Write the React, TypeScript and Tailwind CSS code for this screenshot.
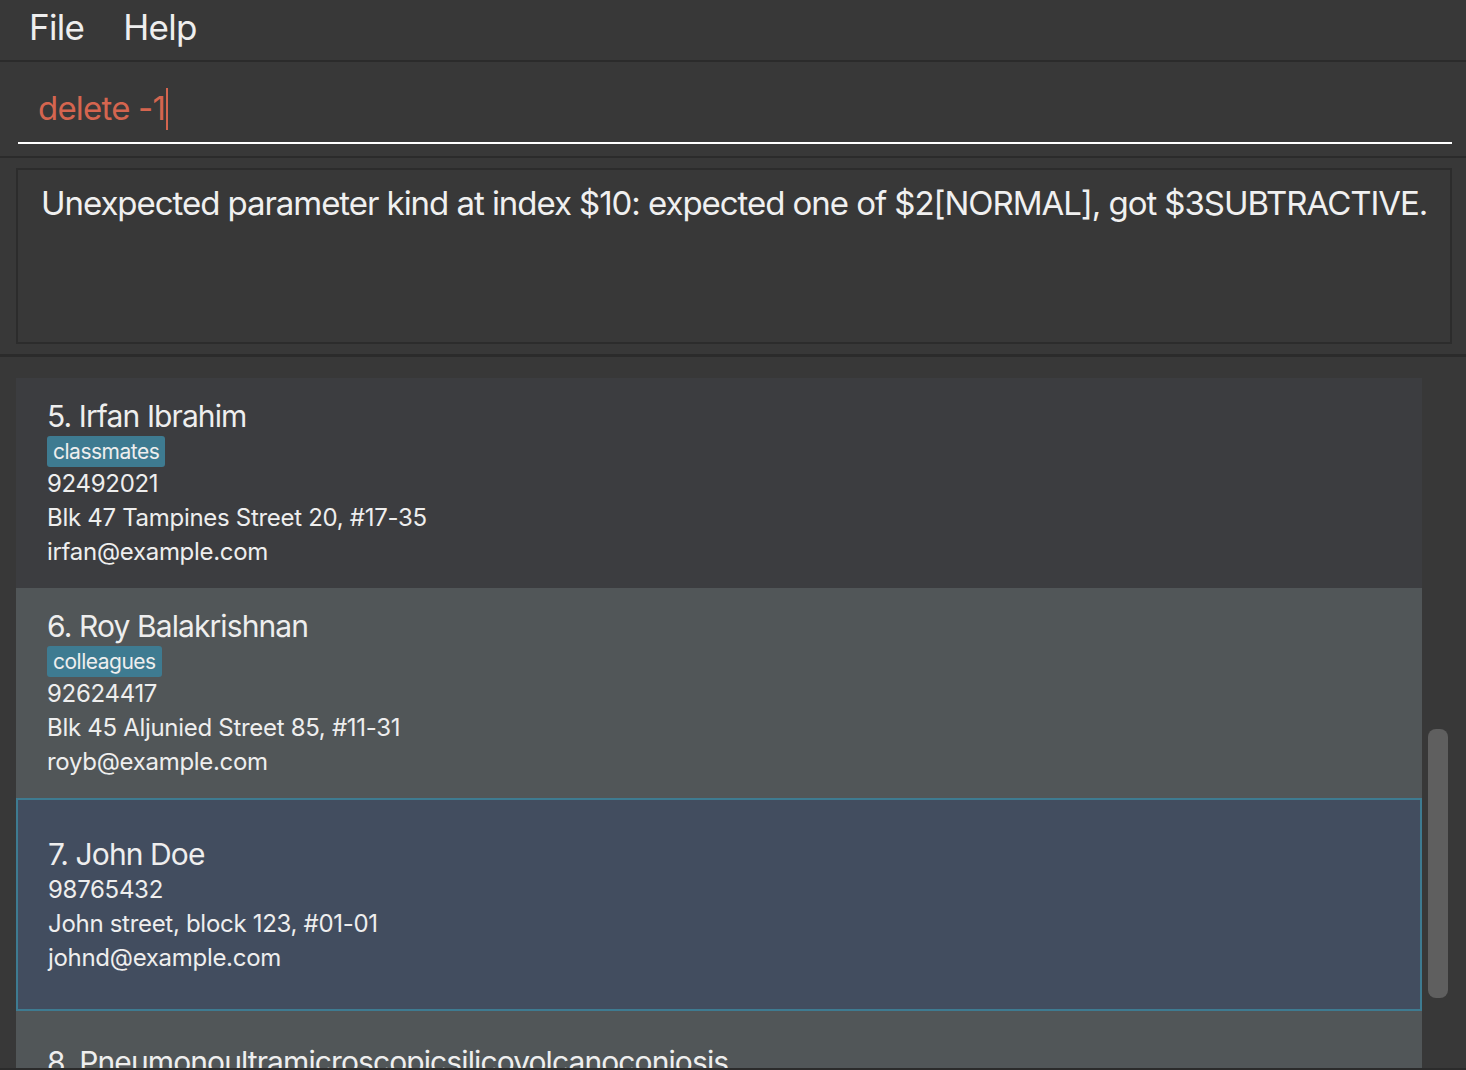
import React from "react";

const font = { fontFamily: "Inter, 'Noto Sans', sans-serif" };

type Person = {
  idx: number;
  name: string;
  tag?: string;
  phone: string;
  address: string;
  email: string;
};

const people: Person[] = [
  { idx: 5, name: "Irfan Ibrahim", tag: "classmates", phone: "92492021", address: "Blk 47 Tampines Street 20, #17-35", email: "irfan@example.com" },
  { idx: 6, name: "Roy Balakrishnan", tag: "colleagues", phone: "92624417", address: "Blk 45 Aljunied Street 85, #11-31", email: "royb@example.com" },
];

const nameCls = "h-[38px] text-[30px] leading-[38px] tracking-[-0.9px]";
const lineCls = "h-[34px] text-[24px] leading-[34px] tracking-[-0.3px]";

function Card({ p, bg }: { p: Person; bg: string }) {
  return (
    <div className={`h-[210px] shrink-0 flex items-center pl-[31px] ${bg}`}>
      <div className="flex flex-col text-[#eeeeee]">
        <div className={nameCls}>{p.idx}. {p.name}</div>
        {p.tag && (
          <div className="flex">
            <span className="h-[31px] mt-[1px] px-[6px] rounded-[3px] bg-[#3e7b91] text-[21px] leading-[31px] tracking-[-0.5px] text-[#eeeeee]">{p.tag}</span>
          </div>
        )}
        <div className={lineCls}>{p.phone}</div>
        <div className={lineCls}>{p.address}</div>
        <div className={lineCls}>{p.email}</div>
      </div>
    </div>
  );
}

export default function App() {
  return (
    <div className="w-[1466px] h-[1070px] bg-[#2b2b2b] flex flex-col overflow-hidden" style={font}>
      {/* menu bar */}
      <div className="h-[60px] bg-[#383838] flex items-start pt-[4px] pl-[29px] gap-[39px] text-[35px] leading-[46px] text-[#eeeeee] tracking-[-0.7px] shrink-0">
        <span>File</span>
        <span>Help</span>
      </div>
      <div className="h-[2px] shrink-0" />
      {/* command box */}
      <div className="h-[94px] bg-[#383838] pl-[18px] pr-[14px] pt-[24px] shrink-0">
        <div className="h-[58px] border-b-2 border-white flex items-start pl-[20px]">
          <span className="text-[33px] leading-[44px] text-[#d5654f] tracking-[-0.8px]">delete -1</span>
          <span className="w-[2px] h-[42px] bg-[#d5654f] ml-[1px] mt-[2px]" />
        </div>
      </div>
      <div className="h-[2px] shrink-0" />
      {/* result box */}
      <div className="h-[196px] bg-[#383838] pl-[16px] pr-[14px] pt-[10px] shrink-0">
        <div className="h-[176px] border-2 border-[#2c2c2c] bg-[#383838] pl-[23px] pt-[11px]">
          <div className="text-[33px] leading-[44px] text-[#f0f0f0] tracking-[-1.05px] whitespace-nowrap">
            Unexpected parameter kind at index $10: expected one of $2[NORMAL], got $3SUBTRACTIVE.
          </div>
        </div>
      </div>
      <div className="h-[3px] shrink-0" />
      {/* list */}
      <div className="h-[711px] bg-[#383838] flex pt-[21px] pl-[16px] shrink-0">
        <div className="w-[1406px] flex flex-col overflow-hidden">
          <Card p={people[0]} bg="bg-[#3c3d40]" />
          <Card p={people[1]} bg="bg-[#515658]" />
          <div className="h-[213px] shrink-0 flex items-center pl-[30px] bg-[#424d5f] border-2 border-[#3e7b91]">
            <div className="flex flex-col text-[#eeeeee]">
              <div className={nameCls}>7. John Doe</div>
              <div className={lineCls}>98765432</div>
              <div className={lineCls}>John street, block 123, #01-01</div>
              <div className={lineCls}>johnd@example.com</div>
            </div>
          </div>
          <div className="h-[210px] shrink-0 bg-[#515658] pl-[31px] pt-[32px]">
            <div className={`${nameCls} text-[#eeeeee]`}>8. Pneumonoultramicroscopicsilicovolcanoconiosis</div>
          </div>
        </div>
        <div className="flex-1 relative">
          <div className="absolute left-[6px] top-[351px] w-[20px] h-[269px] rounded-[8px] bg-[#5f5f5f]" />
        </div>
      </div>
    </div>
  );
}
